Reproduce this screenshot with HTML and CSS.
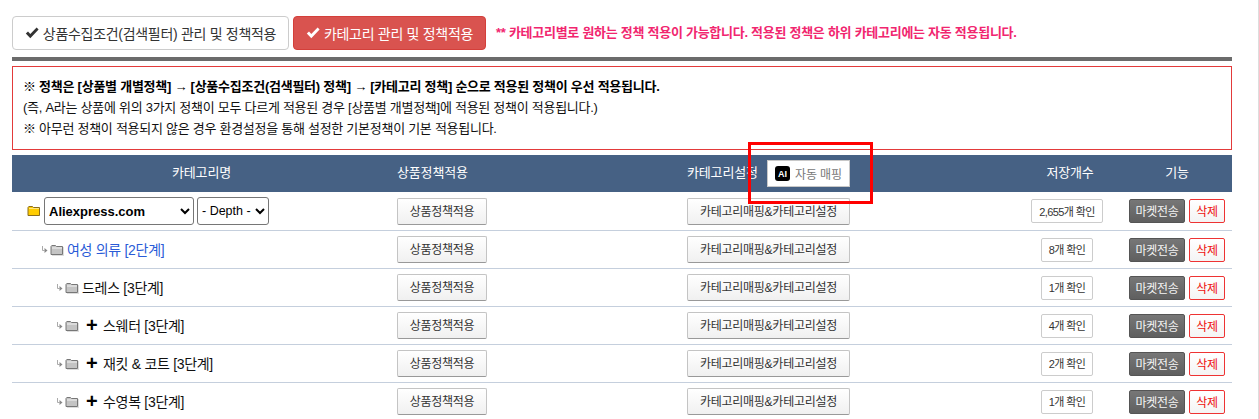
FILE: index.html
```html
<!DOCTYPE html>
<html lang="ko">
<head>
<meta charset="utf-8">
<title>카테고리 관리</title>
<link rel="stylesheet" href="styles.css">
</head>
<body>
<svg class="defs" width="0" height="0" aria-hidden="true">
  <symbol id="folder-gray" viewBox="0 0 14 12">
    <path d="M1 2.5 L1.8 1.5 H5.5 L6.5 2.5 H12.5 V10.5 H1 Z" fill="#c4c4c4" stroke="#777" stroke-width="1"/>
    <path d="M2 4 H12" stroke="#f2f2f2" stroke-width="1"/>
    <path d="M2 11.5 H14 M13.5 3 V11.5" stroke="#ddd" stroke-width="1"/>
  </symbol>
  <symbol id="branch" viewBox="0 0 8 9">
    <path d="M0.5 1 V5.5 H2.5" fill="none" stroke="#aaa" stroke-width="1"/>
    <path d="M2.5 3 L5.5 5.5 L2.5 8 Z" fill="#888"/>
  </symbol>
  <symbol id="check" viewBox="0 0 14 12">
    <path d="M0.8 6.5 L3 4.4 L5.3 7 L11.6 0.6 L13.6 2.6 L5.3 11.2 Z"/>
  </symbol>
</svg>
<div class="page">
  <div class="tabs">
    <a class="tab tab-plain"><svg class="check"><use href="#check"/></svg>상품수집조건(검색필터) 관리 및 정책적용</a>
    <a class="tab tab-active"><svg class="check"><use href="#check"/></svg>카테고리 관리 및 정책적용</a>
    <span class="tab-note">** 카테고리별로 원하는 정책 적용이 가능합니다. 적용된 정책은 하위 카테고리에는 자동 적용됩니다.</span>
  </div>
  <div class="rule"></div>
  <div class="notice">
    <p class="notice-strong">※ 정책은 [상품별 개별정책] → [상품수집조건(검색필터) 정책] → [카테고리 정책] 순으로 적용된 정책이 우선 적용됩니다.</p>
    <p>(즉, A라는 상품에 위의 3가지 정책이 모두 다르게 적용된 경우 [상품별 개별정책]에 적용된 정책이 적용됩니다.)</p>
    <p>※ 아무런 정책이 적용되지 않은 경우 환경설정을 통해 설정한 기본정책이 기본 적용됩니다.</p>
  </div>
  <div class="table">
    <div class="row head">
      <div class="c-name">카테고리명</div>
      <div class="c-policy">상품정책적용</div>
      <div class="c-map"><span class="map-title">카테고리설정</span><span class="ai-btn"><span class="ai-badge">AI</span>자동 매핑</span></div>
      <div class="c-count">저장개수</div>
      <div class="c-func">기능</div>
    </div>

    <div class="row row-first">
      <div class="c-name lv1">
        <svg class="folder-open" width="14" height="12" viewBox="0 0 14 12"><path d="M1 2.5 L1.8 1.5 H5.5 L6.5 2.5 H12.5 V10.5 H1 Z" fill="#ffcc00" stroke="#8a6d1c"/><path d="M2 3.5 H12" stroke="#ffe680"/></svg>
        <select class="sel sel-site"><option>Aliexpress.com</option></select>
        <select class="sel sel-depth"><option>- Depth -</option></select>
      </div>
      <div class="c-policy"><button class="btn btn-policy">상품정책적용</button></div>
      <div class="c-map"><button class="btn btn-map">카테고리매핑&amp;카테고리설정</button></div>
      <div class="c-count"><button class="btn-count">2,655개 확인</button></div>
      <div class="c-func"><button class="btn-send">마켓전송</button><button class="btn-del">삭제</button></div>
    </div>

    <div class="row">
      <div class="c-name lv2"><svg class="branch"><use href="#branch"/></svg><svg class="folder"><use href="#folder-gray"/></svg><a class="cat-link">여성 의류 [2단계]</a></div>
      <div class="c-policy"><button class="btn btn-policy">상품정책적용</button></div>
      <div class="c-map"><button class="btn btn-map">카테고리매핑&amp;카테고리설정</button></div>
      <div class="c-count"><button class="btn-count">8개 확인</button></div>
      <div class="c-func"><button class="btn-send">마켓전송</button><button class="btn-del">삭제</button></div>
    </div>

    <div class="row">
      <div class="c-name lv3"><svg class="branch"><use href="#branch"/></svg><svg class="folder"><use href="#folder-gray"/></svg><span class="cat">드레스 [3단계]</span></div>
      <div class="c-policy"><button class="btn btn-policy">상품정책적용</button></div>
      <div class="c-map"><button class="btn btn-map">카테고리매핑&amp;카테고리설정</button></div>
      <div class="c-count"><button class="btn-count">1개 확인</button></div>
      <div class="c-func"><button class="btn-send">마켓전송</button><button class="btn-del">삭제</button></div>
    </div>

    <div class="row">
      <div class="c-name lv3"><svg class="branch"><use href="#branch"/></svg><svg class="folder"><use href="#folder-gray"/></svg><span class="plus">+</span><span class="cat">스웨터 [3단계]</span></div>
      <div class="c-policy"><button class="btn btn-policy">상품정책적용</button></div>
      <div class="c-map"><button class="btn btn-map">카테고리매핑&amp;카테고리설정</button></div>
      <div class="c-count"><button class="btn-count">4개 확인</button></div>
      <div class="c-func"><button class="btn-send">마켓전송</button><button class="btn-del">삭제</button></div>
    </div>

    <div class="row">
      <div class="c-name lv3"><svg class="branch"><use href="#branch"/></svg><svg class="folder"><use href="#folder-gray"/></svg><span class="plus">+</span><span class="cat">재킷 &amp; 코트 [3단계]</span></div>
      <div class="c-policy"><button class="btn btn-policy">상품정책적용</button></div>
      <div class="c-map"><button class="btn btn-map">카테고리매핑&amp;카테고리설정</button></div>
      <div class="c-count"><button class="btn-count">2개 확인</button></div>
      <div class="c-func"><button class="btn-send">마켓전송</button><button class="btn-del">삭제</button></div>
    </div>

    <div class="row">
      <div class="c-name lv3"><svg class="branch"><use href="#branch"/></svg><svg class="folder"><use href="#folder-gray"/></svg><span class="plus">+</span><span class="cat">수영복 [3단계]</span></div>
      <div class="c-policy"><button class="btn btn-policy">상품정책적용</button></div>
      <div class="c-map"><button class="btn btn-map">카테고리매핑&amp;카테고리설정</button></div>
      <div class="c-count"><button class="btn-count">1개 확인</button></div>
      <div class="c-func"><button class="btn-send">마켓전송</button><button class="btn-del">삭제</button></div>
    </div>
  </div>
</div>
<div class="callout"></div>
</body>
</html>
```
FILE: styles.css
```css
* { box-sizing: border-box; }
html, body { margin: 0; height: 419px; overflow: hidden; background: #fff; }
body { font-family: "Liberation Sans", "Noto Sans CJK KR", sans-serif; font-size: 13px; color: #111; position: relative; border-right: 1px solid #ddd; }
.defs { position: absolute; }
.page { width: 1220px; margin-left: 12px; padding-top: 16px; }
button { font-family: inherit; margin: 0; cursor: pointer; }

.tabs { display: flex; align-items: center; gap: 4px; height: 34px; }
.tab { display: flex; align-items: center; justify-content: center; gap: 4px; height: 34px; padding-bottom: 1px; border-radius: 4px; font-size: 14px; letter-spacing: -0.3px; }
.tab-plain { width: 277px; border: 1px solid #ccc; color: #333; background: #fff; }
.tab-active { width: 193px; background: #d9534f; border: 1px solid #d43f3a; color: #fff; }
.check { width: 14px; height: 12px; fill: currentColor; flex: none; }
.tab-note { margin: 0 0 3px 6px; font-size: 13px; font-weight: 700; letter-spacing: -0.27px; color: #f1266f; }

.rule { height: 4px; margin-top: 7px; background: #6b6b6b; }
.notice { height: 84px; margin-top: 5px; padding: 9px 10px 0; border: 1px solid #e33a3a; }
.notice p { margin: 0; height: 21px; line-height: 21px; font-size: 13px; letter-spacing: -0.27px; }
.notice .notice-strong { font-weight: 700; color: #000; letter-spacing: -0.25px; }

.table { margin-top: 5px; }
.row { display: grid; grid-template-columns: 385px 290px 330px 100px 115px; align-items: center; height: 38px; border-bottom: 1px solid #c5cfdd; }
.row-first { height: 39px; }
.head { height: 37px; background: #466184; border-bottom: 0; color: #fff; font-size: 13px; letter-spacing: -0.15px; }
.head > div { padding-bottom: 4px; }
.head .c-name { justify-content: center; padding-right: 6px; }
.c-name { display: flex; align-items: center; }
.c-policy, .c-map { display: flex; align-items: center; }
.c-count { display: flex; justify-content: center; }
.c-func { display: flex; gap: 4px; padding-left: 12px; }
.head .c-func { justify-content: center; width: 96px; margin-left: 12px; padding-left: 0; }
.head .c-count { padding-left: 6px; }

.head .c-map { padding-bottom: 0; }
.map-title { margin-bottom: 4px; }
.ai-btn { display: inline-flex; align-items: center; justify-content: center; gap: 5px; width: 83px; height: 27px; margin: 0 0 0 auto; background: #fff; border: 1px solid #c8c8c8; color: #777; font-size: 12px; letter-spacing: -0.1px; }
.c-map { width: 163px; }
.ai-badge { display: flex; align-items: center; justify-content: center; width: 15px; height: 15px; border-radius: 3px; background: #000; color: #fff; font-size: 9px; font-weight: 700; }

.lv1 { padding-left: 15px; }
.lv2 { padding-left: 30px; }
.lv3 { padding-left: 45px; }
.folder-open { margin-right: 3px; flex: none; }
.branch { width: 8px; height: 9px; flex: none; }
.folder { width: 14px; height: 12px; margin-right: 3px; flex: none; }
.sel { height: 28px; background: #fff; border: 1px solid #767676; border-radius: 3px; font-family: inherit; font-size: 13px; color: #000; }
.sel-site { width: 150px; font-weight: 700; }
.sel-depth { width: 72px; margin-left: 3px; font-size: 12.5px; }
.cat-link { margin-bottom: 2px; color: #2a5bd7; font-size: 14px; letter-spacing: -0.3px; }
.cat { margin-bottom: 2px; color: #111; font-size: 14px; letter-spacing: -0.3px; }
.plus { width: 10px; margin: 0 7px 2px 4px; font-size: 20px; font-weight: 700; line-height: 1; color: #000; text-align: center; }

.btn { height: 27px; background: linear-gradient(#fff, #f0f0f0); border: 1px solid #c4c4c4; border-bottom-color: #999; border-radius: 2px; font-size: 12px; letter-spacing: -0.25px; color: #333; padding: 0 0 2px; }
.btn-policy { width: 90px; }
.btn-map { width: 163px; }
.btn-count { height: 24px; padding: 0 7px 1px; background: #fff; border: 1px solid #ccc; border-radius: 2px; font-size: 11px; letter-spacing: -0.6px; color: #333; }
.btn-send { width: 56px; height: 24px; padding: 0 0 1px; background: linear-gradient(#777, #5f5f5f); border: 1px solid #555; border-radius: 2px; color: #f5f5f5; font-size: 12px; letter-spacing: -0.3px; }
.btn-del { width: 36px; height: 24px; padding: 0 0 1px; background: linear-gradient(#fff, #f4f4f4); border: 1px solid #e33; border-radius: 2px; color: #e11; font-size: 12px; letter-spacing: -0.3px; }

.callout { position: absolute; left: 748px; top: 142px; width: 125px; height: 62px; border: 3px solid #f00; }
```
